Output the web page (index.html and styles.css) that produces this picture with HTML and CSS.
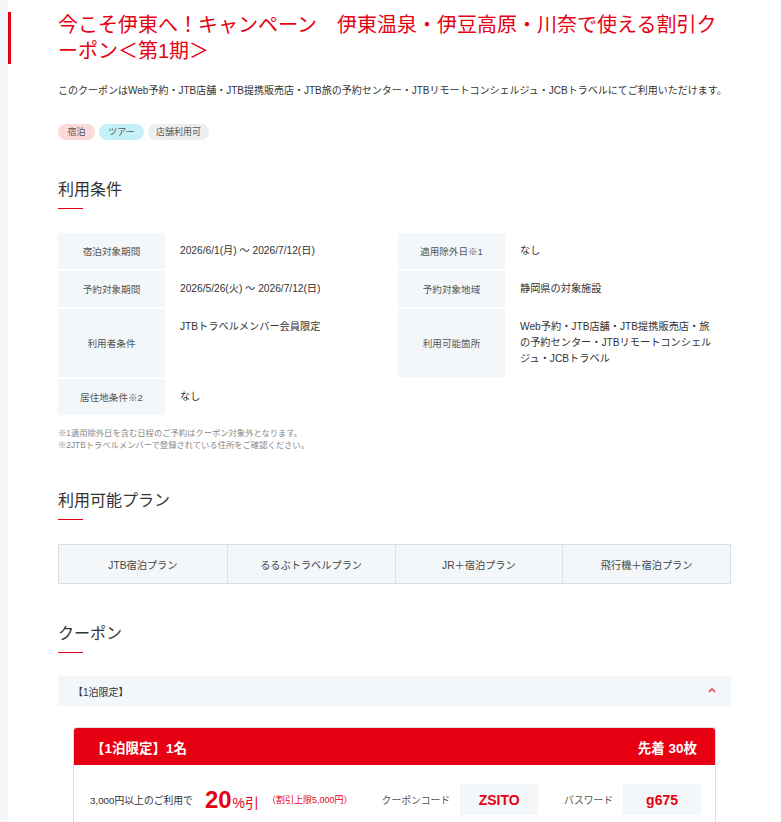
FILE: index.html
```html
<!DOCTYPE html>
<html lang="ja">
<head>
<meta charset="utf-8">
<title>今こそ伊東へ！キャンペーン</title>
<link rel="stylesheet" href="styles.css">
</head>
<body>
<div class="page">
  <main class="main">
    <h1 class="title">今こそ伊東へ！キャンペーン　伊東温泉・伊豆高原・川奈で使える割引クーポン＜第1期＞</h1>
    <p class="lead">このクーポンはWeb予約・JTB店舗・JTB提携販売店・JTB旅の予約センター・JTBリモートコンシェルジュ・JCBトラベルにてご利用いただけます。</p>
    <ul class="tags">
      <li class="tag tag-pink">宿泊</li>
      <li class="tag tag-cyan">ツアー</li>
      <li class="tag tag-gray">店舗利用可</li>
    </ul>

    <section class="section">
      <h2 class="heading">利用条件</h2>
      <div class="cond">
        <div class="th">宿泊対象期間</div>
        <div class="td">2026/6/1(月) 〜 2026/7/12(日)</div>
        <div class="th">適用除外日※1</div>
        <div class="td">なし</div>
        <div class="th">予約対象期間</div>
        <div class="td">2026/5/26(火) 〜 2026/7/12(日)</div>
        <div class="th">予約対象地域</div>
        <div class="td">静岡県の対象施設</div>
        <div class="th">利用者条件</div>
        <div class="td">JTBトラベルメンバー会員限定</div>
        <div class="th">利用可能箇所</div>
        <div class="td">Web予約・JTB店舗・JTB提携販売店・旅の予約センター・JTBリモートコンシェルジュ・JCBトラベル</div>
        <div class="th">居住地条件※2</div>
        <div class="td">なし</div>
      </div>
      <p class="notes">※1適用除外日を含む日程のご予約はクーポン対象外となります。<br>※2JTBトラベルメンバーで登録されている住所をご確認ください。</p>
    </section>

    <section class="section">
      <h2 class="heading">利用可能プラン</h2>
      <ul class="plans">
        <li class="plan">JTB宿泊プラン</li>
        <li class="plan">るるぶトラベルプラン</li>
        <li class="plan">JR＋宿泊プラン</li>
        <li class="plan">飛行機＋宿泊プラン</li>
      </ul>
    </section>

    <section class="section">
      <h2 class="heading">クーポン</h2>
      <div class="acc">
        <span class="acc-label">【1泊限定】</span>
        <svg class="acc-caret" width="8" height="6" viewBox="0 0 8 6"><polyline points="1,5 4,2 7,5" fill="none" stroke="#e8415a" stroke-width="1.6"/></svg>
      </div>
      <div class="card">
        <div class="card-head">
          <span>【1泊限定】1名</span>
          <span>先着 30枚</span>
        </div>
        <div class="card-body">
          <span class="cond-text">3,000円以上のご利用で</span>
          <span class="rate"><span class="rate-num">20</span><span class="rate-unit">%引</span></span>
          <span class="limit">（割引上限5,000円）</span>
          <span class="label label-code">クーポンコード</span>
          <span class="codebox">ZSITO</span>
          <span class="label label-pass">パスワード</span>
          <span class="codebox">g675</span>
        </div>
      </div>
    </section>
  </main>
</div>
</body>
</html>
```
FILE: styles.css
```css
* { box-sizing: border-box; }
html, body { margin: 0; padding: 0; }
body {
  background: #f3f7fa;
  font-family: "Liberation Sans", "Noto Sans CJK JP", sans-serif;
  color: #333;
}
.page {
  margin-left: 8px;
  background: #fff;
  min-height: 822px;
  overflow: hidden;
}
.main {
  padding: 12px 50px 0 50px;
}
.title {
  margin: 0 0 0 -50px;
  padding-left: 47px;
  border-left: 3px solid #e60012;
  color: #e60012;
  font-size: 20px;
  line-height: 26px;
  font-weight: normal;
}
.lead {
  margin: 19px 0 0;
  font-size: 10px;
  line-height: 16px;
  color: #333;
  white-space: nowrap;
}
.tags {
  list-style: none;
  margin: 25px 0 0;
  padding: 0;
  display: flex;
  gap: 4px;
}
.tag {
  height: 16px;
  line-height: 16px;
  font-size: 9px;
  border-radius: 8px;
  color: #555;
  text-align: center;
}
.tag-pink { background: #fdd9da; width: 37px; }
.tag-cyan { background: #c4f0f8; width: 45px; }
.tag-gray { background: #eceff2; width: 61px; }

.section { margin-top: 38px; }
.heading {
  margin: 0;
  font-size: 16px;
  line-height: 24px;
  font-weight: normal;
  color: #333;
}
.heading::after {
  content: "";
  display: block;
  width: 25px;
  height: 1px;
  background: #e60012;
  margin-top: 6px;
}
.cond {
  margin-top: 24px;
  display: grid;
  grid-template-columns: 107px 233px 107px 1fr;
  row-gap: 2px;
}
.th {
  background: #f3f7fa;
  font-size: 9.6px;
  color: #555;
  display: flex;
  align-items: center;
  justify-content: center;
  min-height: 36px;
  text-align: center;
}
.td {
  padding: 10px 15px;
  font-size: 10.2px;
  line-height: 16px;
  color: #333;
}
.notes {
  margin: 12px 0 0;
  font-size: 8.3px;
  line-height: 12px;
  color: #888;
}
.plans {
  list-style: none;
  margin: 24px 0 0;
  padding: 0;
  display: grid;
  grid-template-columns: repeat(4, 1fr);
  border: 1px solid #dcdfe2;
  background: #f3f7fa;
}
.plan {
  height: 38px;
  display: flex;
  align-items: center;
  justify-content: center;
  font-size: 10.2px;
  color: #444;
  border-left: 1px solid #dcdfe2;
}
.plan:first-child { border-left: none; }
.acc {
  margin-top: 23px;
  height: 30px;
  background: #f3f7fa;
  display: flex;
  align-items: center;
  justify-content: space-between;
  padding: 0 15px 0 15px;
  font-size: 10px;
  color: #333;
}
.acc-caret { display: block; margin-top: -2px; }
.card {
  margin: 21px 15px 0;
  border: 1px solid #dcdfe2;
  border-bottom: none;
  border-radius: 4px 4px 0 0;
  overflow: hidden;
}
.card-head {
  background: #e60012;
  color: #fff;
  height: 37px;
  display: flex;
  align-items: center;
  justify-content: space-between;
  padding: 0 18px 0 17px;
  font-size: 13.5px;
  font-weight: bold;
}
.card-body {
  display: flex;
  align-items: center;
  padding: 19px 14px 20px 16px;
  white-space: nowrap;
}
.cond-text { font-size: 9.8px; color: #333; }
.rate { color: #e60012; margin-left: 12px; display: flex; align-items: baseline; }
.rate-num { font-size: 24px; font-weight: bold; line-height: 30px; font-family: "Liberation Sans", sans-serif; }
.rate-unit { font-size: 14px; margin-left: 1px; }
.limit { color: #e60012; font-size: 9px; margin-left: 8px; }
.label { font-size: 9.8px; color: #555; }
.label-code { margin-left: 29px; }
.label-pass { margin-left: 26px; }
.codebox {
  margin-left: 10px;
  width: 79px;
  height: 31px;
  background: #f3f7fa;
  color: #e60012;
  font-weight: bold;
  font-size: 14px;
  display: flex;
  align-items: center;
  justify-content: center;
}
```
